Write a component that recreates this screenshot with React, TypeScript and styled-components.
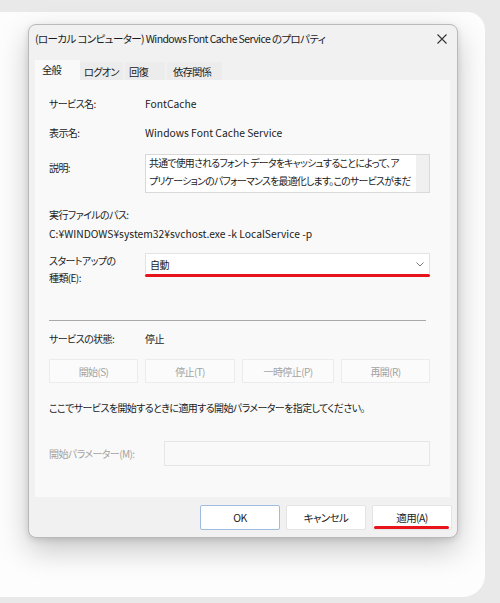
import React from "react";
import styled, { createGlobalStyle } from "styled-components";

const GlobalStyle = createGlobalStyle`
  html, body {
    margin: 0;
    padding: 0;
    background: #e9e9e9;
  }
  body {
    font-family: "Noto Sans CJK JP", "Noto Sans", sans-serif;
    font-feature-settings: "palt";
    font-size: 10px;
    letter-spacing: -0.6px;
    color: #1b1b1b;
  }
`;

const Canvas = styled.div`
  margin: 12px 15px 0 0;
  height: 585px;
  padding: 12px 0 0 28px;
  box-sizing: border-box;
  background: #fdfdfd;
  border-radius: 0 18px 22px 0;
`;

const Dialog = styled.div`
  width: 430px;
  height: 514px;
  box-sizing: border-box;
  background: #f1f1f1;
  border: 1px solid #b9b9b9;
  border-radius: 8px;
  box-shadow: 0 12px 30px rgba(0, 0, 0, 0.22), 0 2px 6px rgba(0, 0, 0, 0.12);
  display: flex;
  flex-direction: column;
`;

const TitleBar = styled.div`
  height: 27px;
  display: flex;
  align-items: center;
  justify-content: space-between;
  padding: 0 10px 0 6px;
  font-size: 10.5px;
  letter-spacing: -0.6px;
`;

const CloseIcon = styled.svg`
  width: 10px;
  height: 10px;
`;

const Tabs = styled.div`
  display: flex;
  align-items: flex-end;
  margin: 8px 0 0 6px;
  height: 20px;
`;

const Tab = styled.div<{ $active?: boolean; $w: number }>`
  width: ${(p) => p.$w}px;
  height: ${(p) => (p.$active ? 20 : 18)}px;
  box-sizing: border-box;
  padding-left: ${(p) => (p.$active ? 7 : p.$w > 50 ? 6 : 4)}px;
  margin-right: ${(p) => (p.$active ? 0 : 2)}px;
  background: ${(p) => (p.$active ? "#f9f9f9" : "#ececec")};
  font-size: 10.3px;
  letter-spacing: -0.8px;
  white-space: nowrap;
  line-height: ${(p) => (p.$active ? 20 : 19)}px;
`;

const Panel = styled.div`
  margin: 0 0 0 6px;
  width: 415px;
  height: 417px;
  box-sizing: border-box;
  background: #f9f9f9;
  padding: 16px 20px 0 14px;
  display: flex;
  flex-direction: column;
`;

const Row = styled.div<{ $top: number }>`
  display: flex;
  align-items: flex-start;
  margin-top: ${(p) => p.$top}px;
`;

const Label = styled.div<{ $w?: number; $dim?: boolean; $offset?: number }>`
  width: ${(p) => p.$w ?? 96}px;
  flex-shrink: 0;
  line-height: 16px;
  margin-top: ${(p) => p.$offset ?? 0}px;
  color: ${(p) => (p.$dim ? "#a3a3a3" : "#1b1b1b")};
`;

const Value = styled.div<{ $latin?: boolean }>`
  line-height: 16px;
  white-space: nowrap;
  font-size: ${(p) => (p.$latin ? "10.3px" : "10px")};
  letter-spacing: ${(p) => (p.$latin ? "0" : "-0.6px")};
`;

const TextLine = styled.div<{ $top: number; $latin?: boolean }>`
  line-height: 16px;
  margin-top: ${(p) => p.$top}px;
  white-space: nowrap;
  font-size: ${(p) => (p.$latin ? "10.3px" : "10px")};
  letter-spacing: ${(p) => (p.$latin ? "0" : "-0.6px")};
`;

const DescBox = styled.div`
  flex: 1;
  height: 39px;
  box-sizing: border-box;
  background: #ffffff;
  border: 1px solid #d9d9d9;
  display: flex;
  overflow: hidden;
`;

const DescText = styled.div`
  flex: 1;
  padding: 0 0 0 3px;
  line-height: 17.5px;
  font-size: 9.9px;
  letter-spacing: -0.72px;
  white-space: nowrap;
  overflow: hidden;
`;

const ScrollTrack = styled.div`
  width: 13px;
  background: #f0f0f0;
`;

const SelectWrap = styled.div`
  flex: 1;
`;

const Select = styled.div`
  height: 21px;
  box-sizing: border-box;
  background: #ffffff;
  border: 1px solid #e3e3e3;
  border-bottom: none;
  display: flex;
  align-items: center;
  justify-content: space-between;
  padding: 0 5px 0 4px;
`;

const RedMark = styled.div`
  height: 3px;
  background: #e8141c;
  border-radius: 2px;
`;

const Chevron = styled.svg`
  width: 8px;
  height: 5px;
`;

const StartupLabel = styled.div`
  line-height: 17px;
`;

const Separator = styled.div`
  height: 1px;
  background: #a9a9a9;
  margin: 34px 4px 0 0;
`;

const ButtonGrid = styled.div`
  display: grid;
  grid-template-columns: 89px 90px 92px 89px;
  column-gap: 7px;
  margin-top: 12px;
`;

const ActionButton = styled.div`
  height: 24px;
  box-sizing: border-box;
  border: 1px solid #ececec;
  background: #fbfbfb;
  color: #a3a3a3;
  display: flex;
  align-items: center;
  justify-content: center;
`;

const ParamInput = styled.div`
  flex: 1;
  height: 25px;
  box-sizing: border-box;
  border: 1px solid #e6e6e6;
  background: #f9f9f9;
`;

const Footer = styled.div`
  display: flex;
  justify-content: flex-end;
  gap: 6px;
  padding: 8px 5px 0 0;
`;

const FooterButton = styled.div<{ $primary?: boolean }>`
  position: relative;
  width: 80px;
  height: 25px;
  box-sizing: border-box;
  background: #ffffff;
  border: 1px solid ${(p) => (p.$primary ? "#9fbbe0" : "#e4e4e4")};
  border-radius: 2px;
  display: flex;
  align-items: center;
  justify-content: center;
  font-size: 10.5px;
`;

const ButtonMark = styled.div`
  position: absolute;
  left: 1px;
  right: 2px;
  bottom: 0;
  height: 3px;
  background: #e8141c;
  border-radius: 2px;
`;

export default function App() {
  return (
    <>
      <GlobalStyle />
      <Canvas>
        <Dialog>
          <TitleBar>
            <span>(ローカル コンピューター) Windows Font Cache Service のプロパティ</span>
            <CloseIcon viewBox="0 0 10 10">
              <path d="M0.5 0.5 L9.5 9.5 M9.5 0.5 L0.5 9.5" stroke="#333" strokeWidth="1.1" fill="none" />
            </CloseIcon>
          </TitleBar>
          <Tabs>
            <Tab $active $w={45}>全般</Tab>
            <Tab $w={43}>ログオン</Tab>
            <Tab $w={40}>回復</Tab>
            <Tab $w={55}>依存関係</Tab>
          </Tabs>
          <Panel>
            <Row $top={0}>
              <Label>サービス名:</Label>
              <Value $latin>FontCache</Value>
            </Row>
            <Row $top={13}>
              <Label>表示名:</Label>
              <Value $latin>Windows Font Cache Service</Value>
            </Row>
            <Row $top={13}>
              <Label $offset={6}>説明:</Label>
              <DescBox>
                <DescText>
                  共通で使用されるフォント データをキャッシュすることによって、ア
                  <br />
                  プリケーションのパフォーマンスを最適化します。このサービスがまだ
                  <br />
                  実行されていない場合は、アプリケーションによって起動されます。
                </DescText>
                <ScrollTrack />
              </DescBox>
            </Row>
            <TextLine $top={14}>実行ファイルのパス:</TextLine>
            <TextLine $top={3} $latin>
              C:¥WINDOWS¥system32¥svchost.exe -k LocalService -p
            </TextLine>
            <Row $top={11}>
              <Label $offset={-1}>
                <StartupLabel>
                  スタートアップの
                  <br />
                  種類(E):
                </StartupLabel>
              </Label>
              <SelectWrap>
                <Select>
                  <span>自動</span>
                  <Chevron viewBox="0 0 8 5">
                    <path d="M0.5 0.5 L4 4 L7.5 0.5" stroke="#777" strokeWidth="1" fill="none" />
                  </Chevron>
                </Select>
                <RedMark />
              </SelectWrap>
            </Row>
            <Separator />
            <Row $top={10}>
              <Label>サービスの状態:</Label>
              <Value>停止</Value>
            </Row>
            <ButtonGrid>
              <ActionButton>開始(S)</ActionButton>
              <ActionButton>停止(T)</ActionButton>
              <ActionButton>一時停止(P)</ActionButton>
              <ActionButton>再開(R)</ActionButton>
            </ButtonGrid>
            <TextLine $top={17}>ここでサービスを開始するときに適用する開始パラメーターを指定してください。</TextLine>
            <Row $top={25}>
              <Label $w={115} $dim $offset={5}>
                開始パラメーター(M):
              </Label>
              <ParamInput />
            </Row>
          </Panel>
          <Footer>
            <FooterButton $primary>OK</FooterButton>
            <FooterButton>キャンセル</FooterButton>
            <FooterButton>
              適用(A)
              <ButtonMark />
            </FooterButton>
          </Footer>
        </Dialog>
      </Canvas>
    </>
  );
}
